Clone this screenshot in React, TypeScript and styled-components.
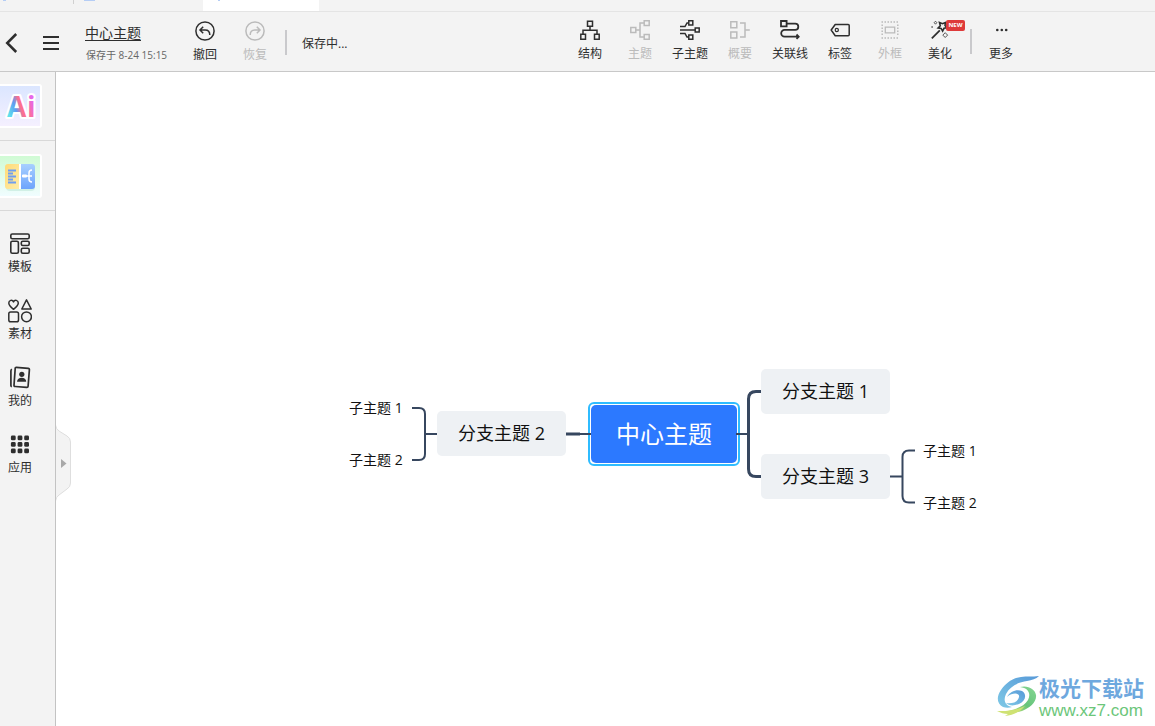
import React from "react";
import styled, { createGlobalStyle } from "styled-components";

const ink = "#2e2e2e";
const faded = "#bbbbbb";
const wire = "#37475f";

const GlobalStyle = createGlobalStyle`
  * { box-sizing: border-box; }
  body {
    margin: 0;
    background: #fff;
    color: ${ink};
    font-family: "Open Sans", "Noto Sans CJK SC", sans-serif;
    font-size: 12px;
  }
  button { font: inherit; color: inherit; background: none; border: 0; padding: 0; cursor: pointer; }
  svg { display: block; flex: none; }
`;

const Page = styled.div`
  display: flex;
  flex-direction: column;
  min-height: 100vh;
`;

const TabStrip = styled.div`
  display: flex;
  height: 12px;
  background: #f3f3f3;
  border-bottom: 1px solid #e4e4e4;
`;

const Tab = styled.div<{ $width: number; $inset: number; $active?: boolean }>`
  width: ${(p) => p.$width}px;
  height: 11px;
  padding-left: ${(p) => p.$inset}px;
  background: ${(p) => (p.$active ? "#fff" : "transparent")};
`;

const TabMark = styled.span<{ $width: number }>`
  display: block;
  width: ${(p) => p.$width}px;
  height: 1px;
  background: #b5cdf5;
`;

const TabDivider = styled.span`
  width: 1px;
  height: 4px;
  background: #d0d0d0;
`;

const Toolbar = styled.header`
  display: flex;
  align-items: center;
  height: 60px;
  background: #f3f3f3;
  border-bottom: 1px solid #c8c8c8;
`;

const FileGroup = styled.div`
  display: flex;
  align-items: center;
  padding-top: 2px;
`;

const IconButton = styled.button<{ $width: number }>`
  display: flex;
  align-items: center;
  width: ${(p) => p.$width}px;
  height: 40px;
`;

const TitleBlock = styled.div`
  display: flex;
  flex-direction: column;
  width: 95px;
  gap: 4px;
`;

const Title = styled.a`
  color: ${ink};
  font-size: 14px;
  line-height: 20px;
  text-decoration: underline;
  text-underline-offset: 2px;
`;

const SavedAt = styled.span`
  padding-left: 1px;
  color: #666;
  font-size: 10px;
  line-height: 16px;
  white-space: nowrap;
`;

const ToolButton = styled.button`
  position: relative;
  display: flex;
  flex-direction: column;
  align-items: center;
  gap: 6px;
  width: 50px;
  height: 44px;
  line-height: 16px;
  white-space: nowrap;
  &:disabled { color: ${faded}; cursor: default; }
`;

const Separator = styled.span<{ $gap: number }>`
  width: 2px;
  height: 25px;
  margin: 0 ${(p) => p.$gap}px 0 5px;
  background: #c9c9cc;
`;

const Tools = styled.div`
  display: flex;
  align-items: center;
  margin-left: auto;
  padding-right: 129px;
`;

const NewBadge = styled.span`
  position: absolute;
  top: 0;
  right: 0;
  width: 19px;
  height: 11px;
  border-radius: 2px;
  background: #de3a3a;
  color: #fff;
  font-size: 6px;
  font-weight: 700;
  line-height: 11px;
  text-align: center;
`;

const Body = styled.div`
  display: flex;
  flex: 1;
`;

const Sidebar = styled.nav`
  width: 56px;
  background: #f3f3f3;
  border-right: 1px solid #c3c3c3;
`;

const TileRow = styled.div<{ $height: number }>`
  display: flex;
  align-items: flex-end;
  height: ${(p) => p.$height}px;
  padding-bottom: 12px;
  border-bottom: 1px solid #d8d8d8;
`;

const Tile = styled.button<{ $from: string; $to: string }>`
  width: 42px;
  height: 44px;
  border: solid #fff;
  border-width: 2px 2px 2px 0;
  border-radius: 0 3px 3px 0;
  background: linear-gradient(${(p) => p.$from}, ${(p) => p.$to});
`;

const SideItems = styled.div`
  display: flex;
  flex-direction: column;
  gap: 23px;
  padding-top: 21px;
`;

const SideButton = styled.button`
  display: flex;
  flex-direction: column;
  align-items: center;
  gap: 2px;
  width: 40px;
  line-height: 18px;
`;

const Canvas = styled.main`
  position: relative;
  flex: 1;
  background: #fff;
  overflow: hidden;
`;

const Wires = styled.svg`
  position: absolute;
  top: 0;
  left: 0;
  overflow: visible;
  fill: none;
  stroke: ${wire};
  pointer-events: none;
`;

const Node = styled.button<{ $x: number; $y: number }>`
  position: absolute;
  left: ${(p) => p.$x}px;
  top: ${(p) => p.$y}px;
  color: #111;
  white-space: nowrap;
`;

const Branch = styled(Node)`
  width: 129px;
  height: 45px;
  padding-bottom: 3px;
  border-radius: 5px;
  background: #eef1f4;
  font-size: 18px;
`;

const Leaf = styled(Node)`
  font-size: 14px;
  line-height: 20px;
`;

const Central = styled(Node)`
  width: 152px;
  height: 64px;
  padding: 1px;
  border: 2px solid #2fbcff;
  border-radius: 6px;
  background: #fff;
`;

const CentralFill = styled.span`
  display: block;
  border-radius: 5px;
  background: #2c79ff;
  color: #fff;
  font-size: 24px;
  line-height: 58px;
`;

const Handle = styled.button`
  position: absolute;
  top: 352px;
  left: -1px;
`;

const Watermark = styled.a`
  position: absolute;
  right: 11px;
  bottom: 6px;
  display: flex;
  align-items: center;
  text-decoration: none;
`;

const SiteText = styled.span`
  display: flex;
  flex-direction: column;
`;

const SiteName = styled.span`
  color: #6ea8de;
  font: 700 21px/30px "Noto Sans CJK SC", sans-serif;
`;

const SiteUrl = styled.span`
  color: #6cc67a;
  font: 500 17px/18px "Liberation Sans", sans-serif;
`;

type IconProps = { children: React.ReactNode; size?: number; weight?: number };

const Icon = ({ children, size = 20, weight = 1.5 }: IconProps) => (
  <svg width={size} height={size} viewBox={`0 0 ${size} ${size}`} fill="none" stroke="currentColor" strokeWidth={weight} aria-hidden="true">
    {children}
  </svg>
);

const undoIcon = (
  <Icon>
    <circle cx="10" cy="10" r="9.1" />
    <path d="M8.2 5.8 5 9l3.2 3.2M5 9h5.2c3 0 4.6 1.7 4.6 5" />
  </Icon>
);
const redoIcon = (
  <Icon>
    <circle cx="10" cy="10" r="9.1" />
    <path d="M11.8 5.8 15 9l-3.2 3.2M15 9H9.8c-3 0-4.6 1.7-4.6 5" />
  </Icon>
);

const tools = [
  { label: "结构", icon: <Icon><path d="M7.5 1.2h5v5h-5zM.8 14.3h4.7v4.9H.8zM14.5 14.3h4.7v4.9h-4.7zM10 6.2v4M3 14.3v-4h14v4" /></Icon> },
  { label: "主题", off: true, icon: <Icon><path d="M.8 7.5h5v5h-5zM14.2.8h5v4.7h-5zM14.2 14.5h5v4.7h-5zM5.800 10h4.2M14.2 3H10v14h4.2" /></Icon> },
  { label: "子主题", icon: <Icon><path d="M8.8.8h4v4.2h-4zM15.2 8h4v4h-4zM8.8 15h4v4.2h-4zM0 10h15.2M0 6.500h5l2-3.500h1.800M0 13.500h5l2 3.500h1.800" /></Icon> },
  { label: "概要", off: true, icon: <Icon><path d="M.8 1.8h6v6h-6zM.8 12h6v6h-6zM10 3h5v14h-5M15 10h4.8" /></Icon> },
  { label: "关联线", icon: <Icon><path strokeWidth="1.8" d="M1 1h5.600v5.400H1zM6.600 3.700h8.600a3.100 3.100 0 0 1 0 6.200H4.600a3.400 3.400 0 0 0 0 6.800H18M16.500 14.500l2.200 2.200-2.200 2.200" /></Icon> },
  { label: "标签", icon: <Icon><path strokeLinejoin="round" d="M5.200 4.500h13q1 0 1 1v9.200q0 1-1 1h-13L1.200 10z" /><circle cx="6.800" cy="10" r="1.600" strokeWidth="1.200" /></Icon> },
  { label: "外框", off: true, icon: <Icon><path strokeDasharray="1.500 1.500" d="M1.500 2h17M1.500 18h17M2.200 4.500V16M17.800 4.500V16" /><path strokeWidth="1.300" d="M5.300 7.200h9.400v5.600H5.300z" /></Icon> },
  { label: "美化", badge: true, icon: <Icon><path strokeWidth="1.800" d="m1.800 18.300 8-8" /><path strokeWidth="1.600" d="m9.500 2.500 3 1.200 2.900-1.200-.4 3 2 2.200-3 .6-1.400 2.700-1.500-2.600-3-.5 2.200-2.200z" /><path strokeWidth="1" opacity=".8" d="M5.500 1.200l1.300 1.500-1.300 1.500-1.300-1.500zM15.200 12.700l2.400 2.400-2.400 2.400-2.400-2.400z" /><path d="M1.500 7h1.200" /></Icon> },
];

const moreIcon = (
  <Icon>
    <g fill="currentColor" stroke="none"><circle cx="6.300" cy="10" r="1.300" /><circle cx="10.800" cy="10" r="1.300" /><circle cx="15.200" cy="10" r="1.300" /></g>
  </Icon>
);

const sideItems = [
  { label: "模板", icon: <Icon size={24} weight={1.6}><rect x="2.800" y="2" width="18.400" height="4.800" rx="1.500" /><rect x="2.800" y="9.200" width="7.600" height="12" rx="1.500" /><rect x="13.300" y="9.200" width="7.900" height="4.300" rx="1.500" /><rect x="13.300" y="16.300" width="7.900" height="4.900" rx="1.500" /></Icon> },
  { label: "素材", icon: <Icon size={24} weight={1.5}><path d="M5.500 10.300C2.500 8 .8 6.300.8 4.100.8 1 4.300.3 5.500 2.900 6.700.3 10.300 1 10.300 4.100c0 2.200-1.800 3.900-4.800 6.200zM18.500.8l4.700 9.200h-9.400z" strokeLinejoin="round" /><rect x=".8" y="13" width="9.700" height="9.700" rx="1.800" /><circle cx="18.500" cy="17.800" r="4.900" /></Icon> },
  { label: "我的", icon: <Icon size={24} weight={1.7}><path strokeLinejoin="round" d="m8.300 1.300 12 1q1.200.1 1.100 1.300l-1.300 16.600q-.1 1.300-1.400 1.200l-11.500-.9q-1.300-.1-1.200-1.300L7.200 2.400q.1-1.200 1.100-1.100zM3.900 3.300q-1 .5-1 1.600v14.500q0 1 .9 1.300" /><g fill="currentColor" stroke="none"><circle cx="13.800" cy="8.300" r="2.600" /><path d="M9 15.800c.2-2.800 2.200-4 4.700-4s4.500 1.400 4.500 4z" /></g></Icon> },
  { label: "应用", icon: <Icon size={24}><g fill="currentColor" stroke="none">{[5.3, 12, 18.6].flatMap((x) => [4.9, 11.4, 17.9].map((y) => <rect key={`${x}-${y}`} x={x - 2.4} y={y - 2.4} width="4.800" height="4.800" rx="1.400" />))}</g></Icon> },
];

const AiLogo = () => (
  <svg width="40" height="40" viewBox="0 0 40 40" aria-hidden="true">
    <defs>
      <linearGradient id="ai" gradientUnits="userSpaceOnUse" x1="8" y1="26" x2="34" y2="18">
        <stop offset="0" stopColor="#5fe3ec" />
        <stop offset=".3" stopColor="#5e9df2" />
        <stop offset=".5" stopColor="#fb6f8e" />
        <stop offset=".75" stopColor="#fb6f9e" />
        <stop offset="1" stopColor="#e566f0" />
      </linearGradient>
    </defs>
    <text x="7 27" y="31" fontFamily="Open Sans, sans-serif" fontWeight="700" fontSize="28" fill="url(#ai)" stroke="#fff" strokeWidth="4" strokeLinejoin="round" paintOrder="stroke">Ai</text>
  </svg>
);

const NotesLogo = () => (
  <svg width="40" height="40" viewBox="0 0 40 40" aria-hidden="true">
    <defs>
      <linearGradient id="noteBlue" x1="0" y1="0" x2="0" y2="1"><stop stopColor="#a8d0ff" /><stop offset="1" stopColor="#6da4fc" /></linearGradient>
      <linearGradient id="noteYellow" x1="0" y1="0" x2="1" y2="1"><stop stopColor="#ffda78" /><stop offset="1" stopColor="#ffeda8" /></linearGradient>
    </defs>
    <rect x="6" y="10" width="29" height="25" rx="4" fill="#bfe8d8" opacity=".6" />
    <path d="M8 8h11v25H8q-3 0-3-3V11q0-3 3-3z" fill="url(#noteYellow)" />
    <path d="M21 8h11q3 0 3 3v19q0 3-3 3H21z" fill="url(#noteBlue)" />
    <path d="M19 8h2v25h-2z" fill="#fff" />
    <path d="M8 14.500h8M8 17.500h5M8 20.500h8M8 23.500h5M8 26.500h8" stroke="#709ef0" strokeWidth="1.800" />
    <path d="M22 20h6M32 14q-3 0-3 3v6q0 3 3 3M28 20h4" fill="none" stroke="#fff" strokeWidth="1.500" />
    <rect x="22" y="18.500" width="5" height="3" rx="1" fill="#fff" />
  </svg>
);

const SwooshLogo = () => (
  <svg width="44" height="42" viewBox="0 0 44 42" aria-hidden="true">
    <defs>
      <linearGradient id="swBlue" x1="0" y1="1" x2="1" y2="0"><stop stopColor="#7fc9e6" /><stop offset="1" stopColor="#5799d8" /></linearGradient>
      <linearGradient id="swGreen" x1="0" y1="1" x2="1" y2="0"><stop stopColor="#e2ea75" /><stop offset=".5" stopColor="#66c47a" /><stop offset="1" stopColor="#86d694" /></linearGradient>
    </defs>
    <path d="M44 1C37 2 32 1 26 2 17 3 10 9 6 15c-5 7-4 14 2 17 3 1 6 1 9 0-7-1-9-7-6-13C15 11 24 7 32 6c5-1 9-2 12-5z" fill="url(#swBlue)" />
    <path d="M12 22c3-6 10-8 15-6 5 3 4 10-3 13-5 2-10 2-13-1 6 1 12-1 13-6 1-4-6-5-12 0z" fill="url(#swBlue)" />
    <path d="M25 12c8-2 15 2 16 8 1 7-6 13-14 16-6 2-13 2-19 1 11-2 21-5 25-12 3-6 1-12-8-13z" fill="url(#swGreen)" />
    <path d="M2 36c6 0 16 1 28-5-6 7-13 9-20 10l3-2c-4 0-7-1-11-3z" fill="#cfe273" />
  </svg>
);

export default function App() {
  return (
    <Page>
      <GlobalStyle />
      <TabStrip>
        <Tab $width={73} $inset={3}><TabMark $width={3} /></Tab>
        <TabDivider />
        <Tab $width={129} $inset={10}><TabMark $width={11} /></Tab>
        <Tab $width={116} $inset={15} $active><TabMark $width={2} /></Tab>
      </TabStrip>
      <Toolbar>
        <FileGroup>
          <IconButton $width={42} aria-label="返回">
            <svg width="20" height="20" viewBox="0 0 20 20" fill="none" stroke={ink} strokeWidth="2.500"><path d="M16.200 1 7.200 10l9 9" /></svg>
          </IconButton>
          <IconButton $width={43} aria-label="菜单">
            <svg width="18" height="14" viewBox="0 0 18 14" stroke={ink} strokeWidth="2"><path d="M1 1h16M1 7h16M1 13h16" /></svg>
          </IconButton>
          <TitleBlock>
            <Title href="#title">中心主题</Title>
            <SavedAt>保存于 8-24 15:15</SavedAt>
          </TitleBlock>
          <ToolButton>{undoIcon}撤回</ToolButton>
          <ToolButton disabled>{redoIcon}恢复</ToolButton>
          <Separator $gap={15} />
          <span>保存中...</span>
        </FileGroup>
        <Tools>
          {tools.map((t) => (
            <ToolButton key={t.label} disabled={t.off}>
              {t.icon}
              {t.label}
              {t.badge && <NewBadge>NEW</NewBadge>}
            </ToolButton>
          ))}
          <Separator $gap={4} />
          <ToolButton>{moreIcon}更多</ToolButton>
        </Tools>
      </Toolbar>
      <Body>
        <Sidebar>
          <TileRow $height={69}><Tile $from="#dbe6ff" $to="#f5f0ff" aria-label="AI"><AiLogo /></Tile></TileRow>
          <TileRow $height={70}><Tile $from="#d0fbd4" $to="#f0fdff" aria-label="大纲"><NotesLogo /></Tile></TileRow>
          <SideItems>
            {sideItems.map((s) => (
              <SideButton key={s.label}>{s.icon}{s.label}</SideButton>
            ))}
          </SideItems>
        </Sidebar>
        <Canvas>
          <Branch $x={381} $y={339}>分支主题 2</Branch>
          <Branch $x={705} $y={297}>分支主题 1</Branch>
          <Branch $x={705} $y={382}>分支主题 3</Branch>
          <Central $x={532} $y={330}><CentralFill>中心主题</CentralFill></Central>
          <Leaf $x={293} $y={326}>子主题 1</Leaf>
          <Leaf $x={293} $y={378}>子主题 2</Leaf>
          <Leaf $x={867} $y={369}>子主题 1</Leaf>
          <Leaf $x={867} $y={421}>子主题 2</Leaf>
          <Wires width="10" height="10" strokeWidth="2" aria-hidden="true">
            <path d="M356 336h7q6 0 6 6v40q0 6-6 6h-7M369 362h12M523 362h12M680 362h12" />
            <path strokeWidth="3" d="M510 362h14M705 319.500h-5q-7.500 0-7.500 7.500v70q0 7.500 7.500 7.500h5" />
            <path d="M834 404.500h12M859 378.500h-6q-6.500 0-6.500 6.500v39q0 6.500 6.500 6.500h6" />
          </Wires>
          <Handle aria-label="展开">
            <svg width="18" height="80" viewBox="0 0 18 80" fill="#f3f3f3" stroke="#dedede">
              <path d="M.5 1Q1 5 4 7l8 5q3.500 2 3.500 6v41q0 4-3.500 6l-8 6q-3 2-3.500 6" />
              <path d="M6 35v9l5.500-4.500z" fill="#a8a8a8" stroke="none" />
            </svg>
          </Handle>
          <Watermark href="#site">
            <SwooshLogo />
            <SiteText><SiteName>极光下载站</SiteName><SiteUrl>www.xz7.com</SiteUrl></SiteText>
          </Watermark>
        </Canvas>
      </Body>
    </Page>
  );
}
